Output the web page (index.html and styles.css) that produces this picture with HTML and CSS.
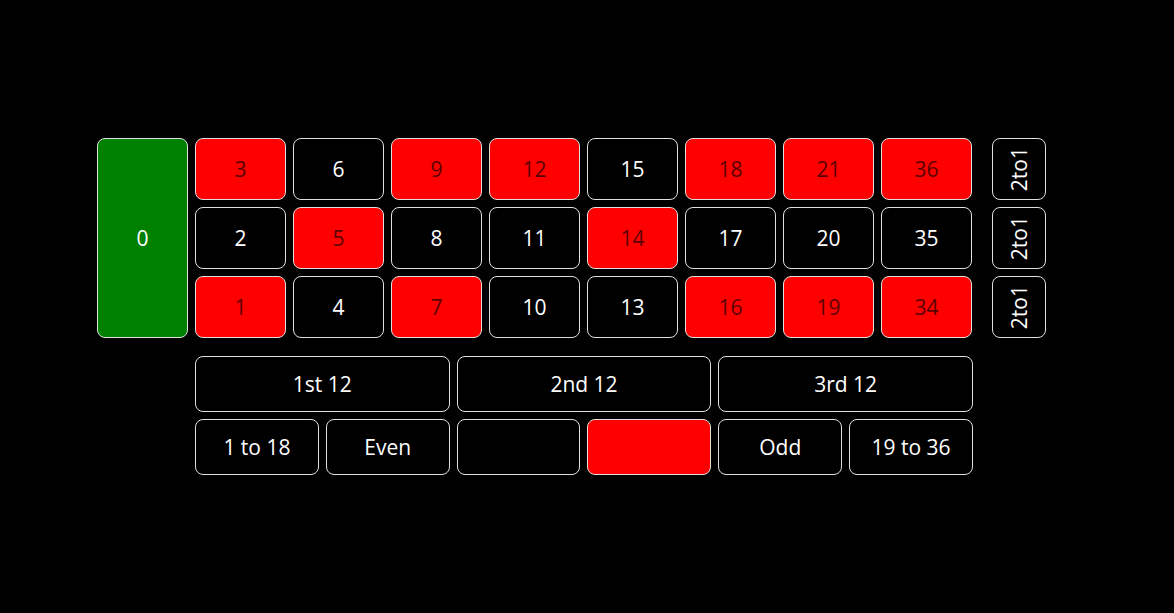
FILE: index.html
```html
<!DOCTYPE html>
<html>
<head>
<meta charset="utf-8">
<link rel="stylesheet" href="styles.css">
</head>
<body>
<div class="table">
  <div class="grid">
    <div class="cell zero">0</div>
    <div class="cell red">3</div>
    <div class="cell black">6</div>
    <div class="cell red">9</div>
    <div class="cell red">12</div>
    <div class="cell black">15</div>
    <div class="cell red">18</div>
    <div class="cell red">21</div>
    <div class="cell red">36</div>
    <div class="cell col"><span class="vert">2to1</span></div>
    <div class="cell black">2</div>
    <div class="cell red">5</div>
    <div class="cell black">8</div>
    <div class="cell black">11</div>
    <div class="cell red">14</div>
    <div class="cell black">17</div>
    <div class="cell black">20</div>
    <div class="cell black">35</div>
    <div class="cell col"><span class="vert">2to1</span></div>
    <div class="cell red">1</div>
    <div class="cell black">4</div>
    <div class="cell red">7</div>
    <div class="cell black">10</div>
    <div class="cell black">13</div>
    <div class="cell red">16</div>
    <div class="cell red">19</div>
    <div class="cell red">34</div>
    <div class="cell col"><span class="vert">2to1</span></div>
  </div>
  <div class="outside">
    <div class="row dozens">
      <div class="cell black">1st 12</div>
      <div class="cell black">2nd 12</div>
      <div class="cell black">3rd 12</div>
    </div>
    <div class="row evens">
      <div class="cell black">1 to 18</div>
      <div class="cell black">Even</div>
      <div class="cell black"></div>
      <div class="cell red"></div>
      <div class="cell black">Odd</div>
      <div class="cell black">19 to 36</div>
    </div>
  </div>
</div>
</body>
</html>
```
FILE: styles.css
```css
html, body {
  margin: 0;
  padding: 0;
  background: #000;
  height: 100%;
}
body {
  font-family: "Open Sans", "Noto Sans", sans-serif;
  font-size: 21px;
  color: #fff;
}
.table {
  padding: 138px 0 0 97px;
}
.grid {
  display: grid;
  grid-template-columns: 91px repeat(8, 91px) 67px;
  grid-template-rows: repeat(3, 62px);
  column-gap: 7px;
  row-gap: 7px;
}
.cell {
  box-sizing: border-box;
  border: 1px solid #e0e0e0;
  border-radius: 8px;
  display: flex;
  align-items: center;
  justify-content: center;
}
.zero {
  grid-row: 1 / span 3;
  background: #008000;
  color: #fff;
}
.red {
  background: #ff0000;
  color: #5c0000;
}
.black {
  background: #000;
  color: #fff;
}
.col {
  margin-left: 13px;
  background: #000;
}
.vert {
  writing-mode: vertical-rl;
  transform: rotate(180deg);
}
.outside {
  margin: 18px 0 0 98px;
  width: 778px;
  display: flex;
  flex-direction: column;
  gap: 7px;
}
.row {
  display: flex;
  gap: 7px;
  height: 56px;
}
.row .cell {
  flex: 1 1 0;
}
```
